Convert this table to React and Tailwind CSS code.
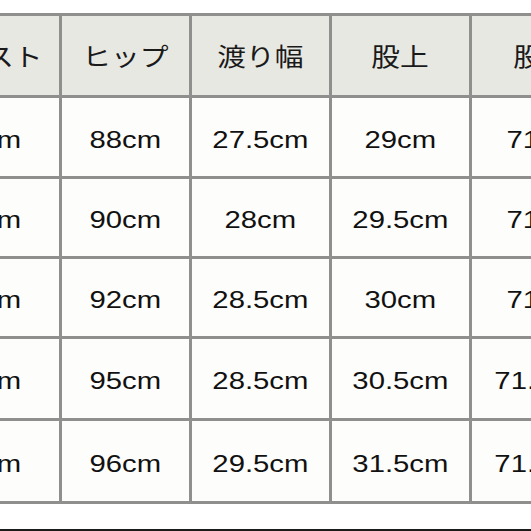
import React from 'react'

const headers = ['ウエスト', 'ヒップ', '渡り幅', '股上', '股下']

const rows = [
  ['64cm', '88cm', '27.5cm', '29cm', '71cm'],
  ['66cm', '90cm', '28cm', '29.5cm', '71cm'],
  ['68cm', '92cm', '28.5cm', '30cm', '71cm'],
  ['71cm', '95cm', '28.5cm', '30.5cm', '71.5cm'],
  ['74cm', '96cm', '29.5cm', '31.5cm', '71.5cm'],
]

export default function App() {
  return (
    <div className="w-[531px] h-[531px] overflow-hidden bg-white flex flex-col border-b-2 border-[#1c1c1c]">
      <div className="mt-[13px] ml-[-91px] w-max bg-[#8f8f8d] p-[3px] grid grid-cols-[147px_127px_137px_137px_140px] grid-rows-[79px_78px_77px_77px_79px_80px] gap-[3px]">
        {headers.map((h) => (
          <div
            key={h}
            className="bg-[#e8e8e2] flex items-center justify-center text-[25px] text-[#1a1a1a] font-['Noto_Sans_CJK_JP',sans-serif]"
          >
            <span className="inline-block scale-x-[1.15]">{h}</span>
          </div>
        ))}
        {rows.map((row, i) =>
          row.map((cell, j) => (
            <div
              key={i + '-' + j}
              className="bg-[#fdfdfb] flex items-center justify-center pt-[5px] text-[24px] text-[#111] font-['Liberation_Sans',Arial,sans-serif]"
            >
              <span className="inline-block scale-x-[1.22]">{cell}</span>
            </div>
          ))
        )}
      </div>
    </div>
  )
}
